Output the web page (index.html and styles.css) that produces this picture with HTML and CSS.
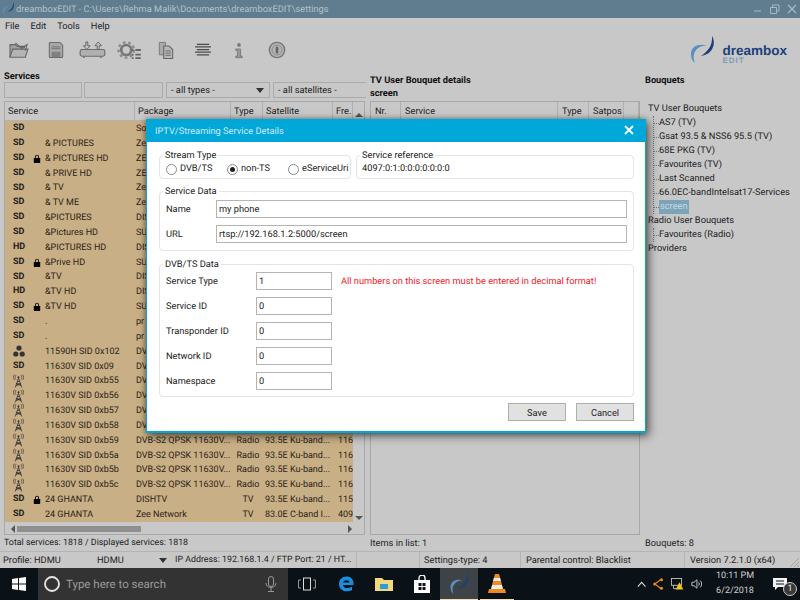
FILE: index.html
```html
<!DOCTYPE html>
<html>
<head>
    <title>dreamboxEDIT</title>
    <link rel="stylesheet" href="styles.css">
</head>
<body>
<svg class="defs" width="0" height="0">
    <symbol id="lock" viewBox="0 0 10 11"><path d="M2.5 5V3.2a2.5 2.5 0 0 1 5 0V5H6.4V3.2a1.4 1.4 0 0 0-2.8 0V5z"/><rect x="1" y="5" width="8" height="6" rx="0.6"/></symbol>
    <symbol id="tower" viewBox="0 0 12 14"><path d="M6 4 2.5 14M6 4l3.5 10M4 10h4M4.800 7.500h2.400M3.200 12l5.600-2M8.800 12 3.200 10" fill="none" stroke="#333" stroke-width="0.900"/><path d="M3.400 0.500C2 2 2 4 3.400 5.500M8.600 0.500C10 2 10 4 8.600 5.500M1.600 0C0 2 0 4 1.600 6M10.400 0C12 2 12 4 10.400 6" fill="none" stroke="#444" stroke-width="0.800"/><circle cx="6" cy="3" r="1.100" fill="#333"/></symbol>
    <symbol id="swoosh" viewBox="0 0 27 28"><path d="M23 0C27 6 25 18 12 20 18 16 24 10 23 0z" fill="#1d3f78"/><path d="M18 9.500C10 7 2 10 2 18 2 22 3 25 6 27 4 22 4 17 8 13 11 10 14 9.500 18 9.500z" fill="#5b8fc0"/></symbol>
</svg>

<div class="window">
    <div class="titlebar">
        <svg class="title-icon" width="13" height="14"><use href="#swoosh"/></svg>
        <span class="title-text">dreamboxEDIT - C:\Users\Rehma Malik\Documents\dreamboxEDIT\settings</span>
        <div class="win-buttons">
            <svg width="12" height="12" viewBox="0 0 12 12"><path d="M2 8h7" stroke="#a9b8c1" stroke-width="1"/></svg>
            <svg width="12" height="12" viewBox="0 0 12 12"><path d="M1.500 4.500h6v6h-6zM3.500 4.500v-2.500h6.500v6H7.500" fill="none" stroke="#a9b8c1"/></svg>
            <svg width="12" height="12" viewBox="0 0 12 12"><path d="M2 2l8 8M10 2l-8 8" stroke="#a9b8c1" stroke-width="1.300"/></svg>
        </div>
    </div>

    <div class="menu">
        <span>File</span><span>Edit</span><span>Tools</span><span>Help</span>
    </div>

    <div class="toolbar">
        <svg width="22" height="18" viewBox="0 0 24 20"><path d="M2 18V4h6l2 2h8v2" fill="#a0a0a0" stroke="#666" stroke-width="1.200"/><path d="M2 18 5 9h17l-3 9z" fill="#b4b4b4" stroke="#666" stroke-width="1.200"/><path d="M8 2l7 6 6-4-2 7" fill="none" stroke="#666" stroke-width="1.200"/></svg>
        <svg width="16" height="18" viewBox="0 0 18 20"><path d="M1.500 2.500a1 1 0 0 1 1-1h11l3 3v13a1 1 0 0 1-1 1h-13a1 1 0 0 1-1-1z" fill="#a8a8a8" stroke="#6c6c6c" stroke-width="1.200"/><path d="M4 6.500h10M4 8.500h10" stroke="#6c6c6c"/><rect x="4" y="12" width="10" height="6" fill="#808080"/></svg>
        <svg width="27" height="19" viewBox="0 0 28 20"><rect x="1" y="9" width="26" height="7" rx="2" fill="#b0b0b0" stroke="#6c6c6c" stroke-width="1.200"/><path d="M9 1v4h2.500L8 9 4.500 5H7V1zM19 9V5h-2.500L20 1l3.500 4H21v4z" fill="#c4c4c4" stroke="#666"/><path d="M5 16v2M23 16v2" stroke="#6c6c6c" stroke-width="1.500"/></svg>
        <svg width="24" height="20" viewBox="0 0 26 22"><circle cx="10" cy="11" r="5.500" fill="none" stroke="#777" stroke-width="3"/><circle cx="10" cy="11" r="8.500" fill="none" stroke="#888" stroke-width="2.500" stroke-dasharray="3 3"/><path d="M16 10h2v2h-2zM20 10h6v2h-6zM16 15h2v2h-2zM20 15h6v2h-6zM16 19h2v2h-2zM20 19h6v2h-6z" fill="#666"/></svg>
        <svg width="16" height="18" viewBox="0 0 18 20"><path d="M1.500 1.500h7v14h-7z" fill="#aaa" stroke="#777"/><path d="M6.500 5.500h6l4 4v10h-10z" fill="#b8b8b8" stroke="#666" stroke-width="1.200"/><path d="M8.500 11h6M8.500 13.500h6M8.500 16h6" stroke="#666"/></svg>
        <svg width="20" height="14" viewBox="0 0 20 16"><path d="M3 1.500h14M1 4.500h18M3 7.500h14M1 10.500h18M3 13.500h14" stroke="#4a4a4a" stroke-width="1.500"/></svg>
        <svg width="8" height="17" viewBox="0 0 10 20"><circle cx="5" cy="3" r="2.300" fill="#777"/><path d="M1 8h6v9h2v2H1v-2h2v-7H1z" fill="#999" stroke="#666" stroke-width="0.800"/></svg>
        <svg width="18" height="18" viewBox="0 0 20 20"><circle cx="10" cy="10" r="8.500" fill="#b4b4b4" stroke="#777" stroke-width="1.600"/><circle cx="10" cy="10" r="5.500" fill="none" stroke="#8a8a8a"/><rect x="8.500" y="6" width="3" height="8" rx="1.500" fill="#666"/></svg>
        <div class="logo">
            <svg width="27" height="28"><use href="#swoosh"/></svg>
            <div class="logo-text">
                <div class="logo-name">dreambox</div>
                <div class="logo-edit">EDIT</div>
            </div>
        </div>
    </div>

    <div class="panes">
        <div class="pane-services">
            <div class="pane-title services-title">Services</div>
            <div class="filters">
                <div class="field f1"></div>
                <div class="field f2"></div>
                <div class="field f3">- all types -<span class="caret"></span></div>
                <div class="field f4">- all satellites -</div>
            </div>
            <div class="list">
                <div class="list-head svc-head">
                    <span>Service</span><span>Package</span><span>Type</span><span>Satellite</span><span>Fre.</span><span class="head-arrow"><i class="arrow-up"></i></span>
                </div>
                <div class="list-body">
                    <div class="svc-rows">
                        <div class="row"><span class="kind"><b>SD</b></span><span></span><span>Sony</span><span></span><span></span><span></span></div>
                        <div class="row"><span class="kind"><b>SD</b></span><span>&amp; PICTURES</span><span>Zee</span><span></span><span></span><span></span></div>
                        <div class="row"><span class="kind"><b>SD</b><svg class="lock"><use href="#lock"/></svg></span><span>&amp; PICTURES HD</span><span>ZEE</span><span></span><span></span><span></span></div>
                        <div class="row"><span class="kind"><b>SD</b></span><span>&amp; PRIVE HD</span><span>ZEE</span><span></span><span></span><span></span></div>
                        <div class="row"><span class="kind"><b>SD</b></span><span>&amp; TV</span><span>Zee</span><span></span><span></span><span></span></div>
                        <div class="row"><span class="kind"><b>SD</b></span><span>&amp; TV ME</span><span>Zee</span><span></span><span></span><span></span></div>
                        <div class="row"><span class="kind"><b>SD</b></span><span>&amp;PICTURES</span><span>DISHTV</span><span></span><span></span><span></span></div>
                        <div class="row"><span class="kind"><b>SD</b></span><span>&amp;Pictures HD</span><span>SUN</span><span></span><span></span><span></span></div>
                        <div class="row"><span class="kind"><b>HD</b></span><span>&amp;PICTURES HD</span><span>DISHTV</span><span></span><span></span><span></span></div>
                        <div class="row"><span class="kind"><b>SD</b><svg class="lock"><use href="#lock"/></svg></span><span>&amp;Prive HD</span><span>SUN</span><span></span><span></span><span></span></div>
                        <div class="row"><span class="kind"><b>SD</b></span><span>&amp;TV</span><span>DISHTV</span><span></span><span></span><span></span></div>
                        <div class="row"><span class="kind"><b>HD</b></span><span>&amp;TV HD</span><span>DISHTV</span><span></span><span></span><span></span></div>
                        <div class="row"><span class="kind"><b>SD</b><svg class="lock"><use href="#lock"/></svg></span><span>&amp;TV HD</span><span>SUN</span><span></span><span></span><span></span></div>
                        <div class="row"><span class="kind"><b>SD</b></span><span>.</span><span>pr</span><span></span><span></span><span></span></div>
                        <div class="row"><span class="kind"><b>SD</b></span><span>.</span><span>pr</span><span></span><span></span><span></span></div>
                        <div class="row"><span class="kind"><svg class="feed" viewBox="0 0 12 12"><circle cx="6" cy="3" r="2.600" fill="#333"/><circle cx="2.800" cy="9" r="2.600" fill="#333"/><circle cx="9.200" cy="9" r="2.600" fill="#333"/></svg></span><span>11590H SID 0x102</span><span>DVB-S2</span><span></span><span></span><span></span></div>
                        <div class="row"><span class="kind"><b>SD</b></span><span>11630V SID 0x09</span><span>DVB-S2</span><span></span><span></span><span></span></div>
                        <div class="row"><span class="kind"><svg class="tower"><use href="#tower"/></svg></span><span>11630V SID 0xb55</span><span>DVB-S2</span><span></span><span></span><span></span></div>
                        <div class="row"><span class="kind"><svg class="tower"><use href="#tower"/></svg></span><span>11630V SID 0xb56</span><span>DVB-S2</span><span></span><span></span><span></span></div>
                        <div class="row"><span class="kind"><svg class="tower"><use href="#tower"/></svg></span><span>11630V SID 0xb57</span><span>DVB-S2</span><span></span><span></span><span></span></div>
                        <div class="row"><span class="kind"><svg class="tower"><use href="#tower"/></svg></span><span>11630V SID 0xb58</span><span>DVB-S2</span><span></span><span></span><span></span></div>
                        <div class="row"><span class="kind"><svg class="tower"><use href="#tower"/></svg></span><span>11630V SID 0xb59</span><span>DVB-S2 QPSK 11630V...</span><span class="mid">Radio</span><span>93.5E Ku-band...</span><span>116</span></div>
                        <div class="row"><span class="kind"><svg class="tower"><use href="#tower"/></svg></span><span>11630V SID 0xb5a</span><span>DVB-S2 QPSK 11630V...</span><span class="mid">Radio</span><span>93.5E Ku-band...</span><span>116</span></div>
                        <div class="row"><span class="kind"><svg class="tower"><use href="#tower"/></svg></span><span>11630V SID 0xb5b</span><span>DVB-S2 QPSK 11630V...</span><span class="mid">Radio</span><span>93.5E Ku-band...</span><span>116</span></div>
                        <div class="row"><span class="kind"><svg class="tower"><use href="#tower"/></svg></span><span>11630V SID 0xb5c</span><span>DVB-S2 QPSK 11630V...</span><span class="mid">Radio</span><span>93.5E Ku-band...</span><span>116</span></div>
                        <div class="row"><span class="kind"><b>SD</b><svg class="lock"><use href="#lock"/></svg></span><span>24 GHANTA</span><span>DISHTV</span><span class="mid">TV</span><span>93.5E Ku-band...</span><span>115</span></div>
                        <div class="row"><span class="kind"><b>SD</b></span><span>24 GHANTA</span><span>Zee Network</span><span class="mid">TV</span><span>83.0E C-band I...</span><span>4090</span></div>
                    </div>
                    <div class="vscroll">
                        <span class="vthumb"></span>
                        <span class="arrow-down"></span>
                    </div>
                </div>
                <div class="hscroll">
                    <span class="arrow-left"></span>
                    <span class="hthumb"></span>
                    <span class="arrow-right"></span>
                </div>
            </div>
        </div>

        <div class="pane-details">
            <div class="pane-title details-title">TV User Bouquet details<br>screen</div>
            <div class="list list-details">
                <div class="list-head det-cols">
                    <span>Nr.</span><span>Service</span><span>Type</span><span>Satpos</span><span></span>
                </div>
            </div>
        </div>

        <div class="pane-bouquets">
            <div class="pane-title bouquets-title">Bouquets</div>
            <div class="tree">
                <div class="tree-root">TV User Bouquets</div>
                <div class="tree-kids">
                    <div class="tree-item"><span>AS7 (TV)</span></div>
                    <div class="tree-item"><span>Gsat 93.5 &amp; NSS6 95.5 (TV)</span></div>
                    <div class="tree-item"><span>68E PKG (TV)</span></div>
                    <div class="tree-item"><span>Favourites (TV)</span></div>
                    <div class="tree-item"><span>Last Scanned</span></div>
                    <div class="tree-item"><span>66.0EC-bandIntelsat17-Services</span></div>
                    <div class="tree-item"><span class="selected">screen</span></div>
                </div>
                <div class="tree-root">Radio User Bouquets</div>
                <div class="tree-kids">
                    <div class="tree-item"><span>Favourites (Radio)</span></div>
                </div>
                <div class="tree-root">Providers</div>
            </div>
        </div>
    </div>

    <div class="counts">
        <span class="count-a">Total services: 1818 / Displayed services: 1818</span>
        <span class="count-b">Items in list: 1</span>
        <span class="count-c">Bouquets: 8</span>
    </div>

    <div class="statusbar">
        <span class="st st-profile">Profile: HDMU</span>
        <span class="st st-combo">HDMU<span class="caret"></span></span>
        <span class="st st-ip">IP Address: 192.168.1.4 / FTP Port: 21 / HT...</span>
        <span class="st st-empty"></span>
        <span class="st st-type">Settings-type: 4</span>
        <span class="st st-parent">Parental control: Blacklist</span>
        <span class="st st-version">Version 7.2.1.0 (x64)
            <svg class="grip" width="12" height="12" viewBox="0 0 12 12"><path d="M11 2 2 11M11 6l-5 5M11 9l-2 2" stroke="#a4a4a4"/></svg>
        </span>
    </div>
</div>

<div class="taskbar">
    <div class="tb-start">
        <svg width="14" height="14" viewBox="0 0 14 14"><path d="M0 2l6-.9V6.500H0zM7 1l7-1v6.500H7zM0 7.500h6v5.400L0 12zM7 7.500h7V14l-7-1z" fill="#fff"/></svg>
    </div>
    <div class="tb-search">
        <svg width="18" height="18" viewBox="0 0 18 18"><circle cx="9" cy="9" r="7" fill="none" stroke="#e6e6e6" stroke-width="1.800"/></svg>
        <span class="tb-search-text">Type here to search</span>
        <svg class="tb-mic" width="12" height="16" viewBox="0 0 12 16"><rect x="3.500" y="0.500" width="5" height="10" rx="2.500" fill="none" stroke="#999"/><path d="M1 7c0 6 10 6 10 0M6 12v3M3 15.500h6" fill="none" stroke="#999"/></svg>
    </div>
    <div class="tb-icon tb-view">
        <svg width="18" height="14" viewBox="0 0 18 14"><rect x="5.500" y="1" width="7" height="12" fill="none" stroke="#ddd"/><path d="M3 3H0.500v8H3M15 3h2.500v8H15" fill="none" stroke="#999"/></svg>
    </div>
    <div class="tb-icon tb-edge">
        <svg width="16" height="16" viewBox="0 0 16 16"><path d="M1 8c0-4 3-7.500 7.500-7.500C13 .5 16 3.500 15.500 9H5c.3 3.500 5 4 9 1.800v3.500C8.500 16.800 1 15 1 8zM5 6.500h6.500C11.300 3.500 6 3.300 5 6.500z" fill="#1a8fe0"/></svg>
    </div>
    <div class="tb-icon tb-files">
        <svg width="18" height="16" viewBox="0 0 18 16"><path d="M0 2h7l2 2h9v11H0z" fill="#f5d77e"/><path d="M5 8h8v5H5z" fill="#2a9fd6"/></svg>
    </div>
    <div class="tb-icon tb-store">
        <svg width="16" height="18" viewBox="0 0 16 18"><path d="M0 5h16v13H0z" fill="#fff"/><path d="M5 5V3a3 3 0 0 1 6 0v2" fill="none" stroke="#fff" stroke-width="1.300"/><path d="M4.500 8h3v3h-3zM8.500 8h3v3h-3zM4.500 12h3v3h-3zM8.500 12h3v3h-3z" fill="#0b1217"/></svg>
    </div>
    <div class="tb-icon tb-app">
        <svg width="21" height="22"><use href="#swoosh"/></svg>
    </div>
    <div class="tb-icon tb-vlc">
        <svg width="18" height="22" viewBox="0 0 18 22"><path d="M7 1h4l1.200 4H5.800zM5 8h8l1 4H4z" fill="#f08a1c"/><path d="M5.800 5h6.400L13 8H5zM4 12h10l1 4H3z" fill="#eee"/><path d="M1 16h16l1 4H0z" fill="#f08a1c"/></svg>
    </div>
    <div class="tb-tray">
        <svg width="11" height="7" viewBox="0 0 11 7"><path d="M1 6l4.500-5L10 6" fill="none" stroke="#ddd" stroke-width="1.200"/></svg>
        <svg width="13" height="14" viewBox="0 0 13 14"><path d="M2 7l7-5M2 7l7 5" stroke="#f08a1c" stroke-width="1.300"/><circle cx="2" cy="7" r="1.800" fill="#f08a1c"/><circle cx="10" cy="2" r="1.800" fill="#f08a1c"/><circle cx="10" cy="12" r="1.800" fill="#f08a1c"/></svg>
        <svg width="15" height="14" viewBox="0 0 15 14"><rect x="0.500" y="0.500" width="12" height="8" fill="none" stroke="#ccc"/><path d="M3 8.500v4h4" fill="none" stroke="#ccc"/><path d="M10 5l4.500 8.500H5.500z" fill="#f2c811"/></svg>
        <svg width="14" height="14" viewBox="0 0 14 14"><path d="M1 5h2.500L7 2v10L3.500 9H1z" fill="none" stroke="#ddd"/><path d="M9 5c1 1 1 3 0 4M11 3c2 2 2 6 0 8" fill="none" stroke="#ddd"/></svg>
    </div>
    <div class="tb-clock"><div>10:11 PM</div><div>6/2/2018</div></div>
    <div class="tb-note">
        <svg width="14" height="13" viewBox="0 0 14 13"><path d="M0 0h14v9H5l-3 3V9H0z" fill="#f2f2f2"/><path d="M3 3h8M3 6h8" stroke="#0b1217"/></svg>
        <span class="note-badge">1</span>
    </div>
</div>

<div class="dialog">
    <div class="dlg-title">
        <span>IPTV/Streaming Service Details</span>
        <svg width="10" height="10" viewBox="0 0 10 10"><path d="M1 1l8 8M9 1l-8 8" stroke="#fff" stroke-width="1.800"/></svg>
    </div>
    <div class="dlg-body">
        <div class="dlg-top">
            <div class="group stream-type">
                <div class="group-title">Stream Type</div>
                <div class="radios">
                    <span class="radio"><i class="dot"></i>DVB/TS</span>
                    <span class="radio"><i class="dot on"></i>non-TS</span>
                    <span class="radio"><i class="dot"></i>eServiceUri</span>
                </div>
            </div>
            <div class="group service-ref">
                <div class="group-title">Service reference</div>
                <div class="ref-value">4097:0:1:0:0:0:0:0:0:0</div>
            </div>
        </div>
        <div class="group service-data">
            <div class="group-title">Service Data</div>
            <div class="data-row"><label>Name</label><div class="input wide">my phone</div></div>
            <div class="data-row"><label>URL</label><div class="input wide">rtsp://192.168.1.2:5000/screen</div></div>
        </div>
        <div class="group dvb-data">
            <div class="group-title">DVB/TS Data</div>
            <div class="num-row"><label>Service Type</label><div class="input num">1</div><span class="warn">All numbers on this screen must be entered in decimal format!</span></div>
            <div class="num-row"><label>Service ID</label><div class="input num">0</div></div>
            <div class="num-row"><label>Transponder ID</label><div class="input num">0</div></div>
            <div class="num-row"><label>Network ID</label><div class="input num">0</div></div>
            <div class="num-row"><label>Namespace</label><div class="input num">0</div></div>
        </div>
        <div class="dlg-buttons">
            <button class="btn">Save</button>
            <button class="btn">Cancel</button>
        </div>
    </div>
</div>
</body>
</html>
```

FILE: styles.css
```css
html, body {
margin: 0;
padding: 0;
width: 800px;
height: 600px;
overflow: hidden;
}
body {
position: relative;
display: flex;
flex-direction: column;
background: #c8c8c8;
font-family: "Roboto", sans-serif;
font-size: 9.25px;
text-rendering: geometricPrecision;
color: #222;
}
.defs {
position: absolute;
}
.window {
flex: 1;
display: flex;
flex-direction: column;
min-height: 0;
}

/* title and menu */
.titlebar {
height: 18px;
display: flex;
align-items: center;
background: #5f7d8e;
color: #b4c2ca;
padding-left: 2px;
flex: none;
}
.title-icon {
margin-right: 1px;
}
.win-buttons {
margin-left: auto;
display: flex;
gap: 5px;
padding-right: 2px;
}
.menu {
height: 17px;
display: flex;
align-items: center;
gap: 11px;
padding-left: 5px;
flex: none;
}
.toolbar {
height: 33px;
flex: none;
box-sizing: border-box;
padding-bottom: 3px;
display: flex;
align-items: center;
padding-left: 8px;
}
.toolbar > svg:nth-child(1) { margin-right: 18px; }
.toolbar > svg:nth-child(2) { margin-right: 15px; }
.toolbar > svg:nth-child(3) { margin-right: 11px; }
.toolbar > svg:nth-child(4) { margin-right: 17px; }
.toolbar > svg:nth-child(5) { margin-right: 19px; }
.toolbar > svg:nth-child(6) { margin-right: 22px; }
.toolbar > svg:nth-child(7) { margin-right: 25px; }
.logo {
margin-left: auto;
display: flex;
align-items: center;
gap: 6px;
padding-right: 13px;
}
.logo-text {
line-height: 1;
padding-top: 8px;
}
.logo-name {
font-family: "Liberation Sans", sans-serif;
font-weight: bold;
font-size: 13.5px;
color: #1d3f78;
line-height: 13px;
}
.logo-edit {
font-family: "Liberation Sans", sans-serif;
font-size: 8px;
font-weight: bold;
letter-spacing: 1px;
color: #7f9cb5;
line-height: 8px;
}

/* panes */
.panes {
flex: 1;
min-height: 0;
display: flex;
}
.pane-title {
font-weight: bold;
color: #111;
line-height: 13px;
}
.pane-services {
width: 361px;
margin-left: 4px;
display: flex;
flex-direction: column;
}
.services-title {
height: 14px;
padding-top: 2px;
box-sizing: border-box;
}
.filters {
display: flex;
height: 16px;
margin-bottom: 3px;
margin-right: -1px;
}
.field {
border: 1px solid #ababab;
box-sizing: border-box;
height: 16px;
line-height: 14px;
padding: 1px 0 0 4px;
display: flex;
align-items: center;
}
.f1 { width: 78px; margin-right: 2px; }
.f2 { width: 79px; margin-right: 3px; }
.f3 { width: 104px; margin-right: 3px; }
.f4 { flex: 1; border-right: none; }
.caret {
width: 0;
height: 0;
border-left: 4px solid transparent;
border-right: 4px solid transparent;
border-top: 5px solid #333;
margin-left: auto;
margin-right: 5px;
}
.list {
flex: 1;
min-height: 0;
border: 1px solid #a8a8a8;
display: flex;
flex-direction: column;
}
.list-head {
height: 18px;
flex: none;
border-bottom: 1px solid #b4b4b4;
}
.list-head span {
display: flex;
align-items: center;
padding-left: 3px;
border-right: 1px solid #b0b0b0;
}
.svc-head {
display: grid;
grid-template-columns: 130px 96px 32px 70px 20px 11px;
}
.svc-head .head-arrow {
border-right: none;
justify-content: center;
align-items: flex-end;
padding: 0 0 3px 0;
}
.list-body {
flex: 1;
min-height: 0;
display: flex;
}
.svc-rows {
width: 349px;
background: #c9af85;
height: 401px;
overflow: hidden;
}
.row {
display: grid;
grid-template-columns: 40px 91px 96px 32px 74px 16px;
grid-auto-rows: 14.85px;
height: 14.85px;
line-height: 16.5px;
font-size: 9px;
white-space: nowrap;
color: #2a2418;
}
.row span {
overflow: hidden;
}
.row > span:nth-child(5) {
padding-left: 1px;
}
.row .mid {
text-align: center;
}
.row .kind {
display: flex;
align-items: center;
padding-left: 8px;
}
.kind b {
width: 20px;
flex: none;
color: #222;
}
.lock {
width: 8px;
height: 9px;
fill: #000;
}
.feed {
width: 12px;
height: 12px;
}
.tower {
width: 11px;
height: 14px;
}
.vscroll {
width: 11px;
display: flex;
flex-direction: column;
align-items: center;
}
.arrow-up {
width: 0;
height: 0;
border-left: 4px solid transparent;
border-right: 4px solid transparent;
border-bottom: 4px solid #555;
}
.vthumb {
width: 7px;
height: 120px;
background: #8f8f8f;
}
.arrow-down {
margin-top: auto;
margin-bottom: 3px;
width: 0;
height: 0;
border-left: 4px solid transparent;
border-right: 4px solid transparent;
border-top: 4px solid #555;
}
.hscroll {
height: 11px;
flex: none;
display: flex;
align-items: center;
padding: 0 12px 0 6px;
}
.arrow-left {
width: 0;
height: 0;
border-top: 4px solid transparent;
border-bottom: 4px solid transparent;
border-right: 4px solid #555;
margin-right: 2px;
}
.hthumb {
width: 124px;
height: 6px;
background: #8f8f8f;
}
.arrow-right {
margin-left: auto;
width: 0;
height: 0;
border-top: 4px solid transparent;
border-bottom: 4px solid transparent;
border-left: 4px solid #555;
}
.pane-details {
width: 270px;
margin-left: 5px;
display: flex;
flex-direction: column;
}
.details-title {
height: 28px;
padding-top: 6px;
box-sizing: border-box;
margin-bottom: 5px;
}
.list-details {
background: #c8c8c8;
}
.det-cols {
display: grid;
grid-template-columns: 30px 157px 31px 35px 15px;
}
.det-cols span {
padding-left: 4px;
}
.pane-bouquets {
flex: 1;
margin-left: 5px;
}
.bouquets-title {
height: 34px;
padding-top: 6px;
box-sizing: border-box;
}
.tree-root {
height: 14px;
line-height: 14px;
padding-left: 3px;
}
.tree-kids {
margin-left: 8px;
border-left: 1px dotted #777;
}
.tree-item {
height: 14px;
line-height: 14px;
display: flex;
align-items: center;
white-space: nowrap;
}
.tree-item::before {
content: "";
width: 5px;
border-top: 1px dotted #777;
flex: none;
}
.tree-kids .selected {
background: #7ba4b8;
color: #c9dbe4;
padding: 0 1px;
}

/* status lines */
.counts {
height: 17px;
flex: none;
display: flex;
align-items: center;
border-bottom: 1px solid #b4b4b4;
box-sizing: border-box;
}
.count-a { width: 366px; padding-left: 4px; box-sizing: border-box; font-size: 8.85px; }
.count-b { width: 275px; padding-left: 4px; box-sizing: border-box; }
.count-c { padding-left: 4px; }
.statusbar {
height: 16px;
flex: none;
display: flex;
align-items: center;
}
.st {
height: 16px;
line-height: 17px;
box-sizing: border-box;
padding-left: 4px;
border-right: 1px solid #b4b4b4;
white-space: nowrap;
overflow: hidden;
}
.st-profile { width: 93px; border-right: none; padding-left: 3px; }
.st-combo { width: 79px; display: flex; align-items: center; border-right: none; }
.st-ip { width: 185px; padding-left: 3px; font-size: 8.85px; }
.st-empty { width: 63px; }
.st-type { width: 101px; }
.st-parent { width: 164px; padding-left: 5px; }
.st-version { flex: 1; border-right: none; padding-left: 5px; display: flex; align-items: center; justify-content: space-between; }
.grip { align-self: flex-end; }

/* taskbar */
.taskbar {
height: 32px;
flex: none;
background: #0b1217;
display: flex;
align-items: center;
color: #e6e6e6;
}
.tb-start {
width: 38px;
display: flex;
justify-content: center;
}
.tb-search {
width: 250px;
height: 32px;
background: #333;
display: flex;
align-items: center;
padding-left: 5px;
box-sizing: border-box;
gap: 5px;
color: #9a9a9a;
font-size: 11.5px;
}
.tb-mic {
margin-left: auto;
margin-right: 11px;
}
.tb-icon {
height: 32px;
display: flex;
align-items: center;
justify-content: center;
box-sizing: border-box;
}
.tb-view { width: 38px; }
.tb-edge { width: 39px; }
.tb-files { width: 38px; }
.tb-store { width: 37px; }
.tb-app {
width: 38px;
background: #3d4347;
border-bottom: 1px solid #f3dcb6;
}
.tb-vlc {
width: 34px;
margin-left: 2px;
border-bottom: 1px solid #f3dcb6;
}
.tb-tray {
margin-left: 123px;
display: flex;
align-items: center;
gap: 7px;
width: 66px;
}
.tb-clock {
width: 54px;
margin-left: 5px;
text-align: center;
line-height: 15px;
color: #d0d0d0;
font-size: 9px;
}
.tb-note {
margin-left: 11px;
display: flex;
align-items: flex-end;
}
.note-badge {
width: 12px;
height: 12px;
line-height: 12px;
text-align: center;
background: #3a3a3a;
border: 1px solid #ccc;
border-radius: 50%;
font-size: 9px;
margin: 0 0 -5px -4px;
}

/* dialog over the window */
.dialog {
position: absolute;
left: 146px;
top: 119px;
width: 500px;
height: 314px;
box-sizing: border-box;
background: #fff;
border: 1px solid #00a8da;
border-width: 0 1px 2px 1px;
box-shadow: 3px 3px 9px rgba(0, 0, 0, 0.55), -1px 0 5px rgba(0, 0, 0, 0.3);
display: flex;
flex-direction: column;
color: #222;
}
.dlg-title {
height: 23px;
flex: none;
box-sizing: border-box;
background: #00a8da;
color: #cfeaf5;
display: flex;
align-items: center;
justify-content: space-between;
padding: 1px 11px 0 8px;
}
.dlg-title svg {
margin-top: -2px;
}
.dlg-body {
flex: 1;
padding: 13px 11px 0 12px;
display: flex;
flex-direction: column;
}
.dlg-top {
display: flex;
gap: 5px;
}
.group {
border: 1px solid #e4e4e4;
border-radius: 4px;
box-sizing: border-box;
}
.group-title {
width: fit-content;
background: #fff;
padding: 0 2px;
margin: -7px 0 0 3px;
line-height: 14px;
}
.stream-type {
width: 192px;
height: 24px;
}
.radios {
display: flex;
padding-left: 6px;
line-height: 14px;
margin-top: -1px;
}
.radio {
display: flex;
align-items: center;
width: 61px;
white-space: nowrap;
}
.dot {
width: 9px;
height: 9px;
border: 1px solid #8a8a8a;
border-radius: 50%;
margin-right: 3px;
box-sizing: content-box;
flex: none;
display: flex;
align-items: center;
justify-content: center;
}
.dot.on::before {
content: "";
width: 5px;
height: 5px;
border-radius: 50%;
background: #222;
}
.service-ref {
flex: 1;
height: 24px;
}
.ref-value {
padding-left: 5px;
line-height: 14px;
margin-top: -1px;
}
.service-data {
margin-top: 12px;
height: 60px;
}
.service-data .group-title {
margin-bottom: 1px;
}
.data-row {
display: flex;
align-items: center;
height: 18px;
margin-bottom: 7px;
padding-left: 6px;
}
.data-row label {
width: 50px;
}
.input {
border: 1px solid #b4b4b4;
height: 18px;
line-height: 17px;
box-sizing: border-box;
padding-left: 2px;
}
.wide {
width: 411px;
}
.dvb-data {
margin-top: 13px;
height: 133px;
}
.num-row {
display: flex;
align-items: center;
height: 18px;
margin-bottom: 7px;
padding-left: 6px;
}
.num-row label {
width: 90px;
flex: none;
}
.num {
width: 76px;
flex: none;
}
.warn {
margin-left: 9px;
color: #f0202c;
white-space: nowrap;
}
.dlg-buttons {
display: flex;
justify-content: flex-end;
gap: 10px;
margin-top: 6px;
}
.btn {
width: 58px;
height: 18px;
padding: 0;
border: 1px solid #adadad;
background: #e1e1e1;
font-family: "Roboto", sans-serif;
font-size: 9.25px;
color: #222;
}
```
